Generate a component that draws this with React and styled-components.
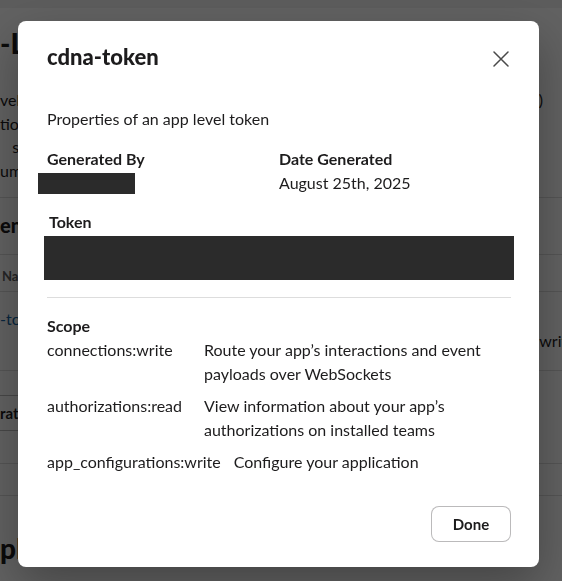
import React from 'react'
import styled, { createGlobalStyle } from 'styled-components'

const GlobalStyle = createGlobalStyle`
    html, body {
        margin: 0;
        padding: 0;
        background: #ffffff;
    }
    body {
        font-family: Lato, "Noto Sans", "Liberation Sans", sans-serif;
        color: #1d1c1d;
        overflow: hidden;
    }
`

const text = '#1d1c1d'

// ---------- background page (dimmed) ----------

const Page = styled.div`
    width: 562px;
    height: 581px;
    overflow: hidden;
    background: #ffffff;
    font-size: 16px;
`

const TopBar = styled.div`
    height: 8px;
    background: #f1f1f1;
`

const PageHeading = styled.h1`
    margin: 18px 0 0;
    font-size: 28px;
    line-height: 34px;
    font-weight: 900;
    white-space: nowrap;
`

const Intro = styled.div`
    margin-top: 28px;
`

const IntroLine = styled.div`
    display: flex;
    justify-content: space-between;
    padding-right: 19px;
    line-height: 23.5px;
    white-space: nowrap;
`

const Rule = styled.div`
    height: 1px;
    background: #dddddd;
    margin-top: ${p => p.$gap}px;
`

const SectionTitle = styled.h2`
    margin: 13px 0 0;
    font-size: 20px;
    line-height: 28px;
    font-weight: 900;
    white-space: nowrap;
`

const TableHead = styled.div`
    margin-top: 15px;
    border-top: 1px solid #dddddd;
    padding: 12px 0 6px 2px;
    font-size: 13px;
    line-height: 18px;
    font-weight: 700;
    color: #616061;
`

const TableRow = styled.div`
    display: grid;
    grid-template-columns: 1fr 112px;
    box-sizing: border-box;
    min-height: 80px;
    padding: 16px 0 18px;
    border-top: 1px solid #dddddd;
    border-bottom: 1px solid #dddddd;
    line-height: 22px;
    white-space: nowrap;
`

const TokenLink = styled.span`
    color: #1264a3;
    align-self: start;
`

const ScopeCell = styled.span`
    align-self: end;
`

const OutlineButton = styled.div`
    display: inline-flex;
    align-items: center;
    box-sizing: border-box;
    height: 36px;
    margin-top: 24px;
    padding: 0 16px 0 0;
    border: 1px solid #bbbbbb;
    border-left: none;
    border-radius: 0 4px 4px 0;
    font-size: 15px;
    font-weight: 700;
    white-space: nowrap;
`

const BottomHeading = styled(PageHeading)`
    margin-top: 35px;
`

// ---------- modal ----------

const Overlay = styled.div`
    position: fixed;
    inset: 0;
    background: rgba(0, 0, 0, 0.62);
    padding: 21px 0 0 18px;
`

const Modal = styled.div`
    width: 521px;
    background: #ffffff;
    border-radius: 8px;
    box-shadow: 0 18px 48px rgba(0, 0, 0, 0.3);
    display: flex;
    flex-direction: column;
    font-size: 16px;
    color: ${text};
`

const ModalHeader = styled.div`
    display: flex;
    justify-content: space-between;
    align-items: center;
    padding: 21px 26px 0 29px;
`

const Title = styled.h1`
    margin: 0;
    font-size: 22px;
    line-height: 30px;
    font-weight: 900;
`

const CloseButton = styled.button`
    width: 24px;
    height: 24px;
    margin-top: 4px;
    padding: 0;
    border: none;
    background: none;
    display: flex;
    align-items: center;
    justify-content: center;
    color: #4a4a4a;
    cursor: pointer;
`

const ModalBody = styled.div`
    padding: 36px 28px 0 29px;
`

const Lead = styled.p`
    margin: 0;
    line-height: 22px;
`

const MetaGrid = styled.div`
    display: grid;
    grid-template-columns: 1fr 1fr;
    margin-top: 18px;
`

const Label = styled.div`
    font-weight: 700;
    line-height: 22px;
    padding-left: ${p => p.$indent || 0}px;
`

const Value = styled.div`
    margin-top: 2px;
    line-height: 22px;
`

const Redacted = styled.div`
    background: #2b2b2b;
    width: ${p => p.$w}px;
    height: ${p => p.$h}px;
    margin: ${p => p.$top}px 0 0 ${p => p.$left}px;
`

const TokenBlock = styled.div`
    margin-top: 17px;
`

const Divider = styled.hr`
    margin: 17px 0 0;
    border: none;
    height: 1px;
    background: #dddddd;
`

const ScopeBlock = styled.div`
    margin-top: 17px;
`

const ScopeList = styled.div`
    display: flex;
    flex-direction: column;
    gap: 8px;
    margin-top: 1px;
`

const ScopeRow = styled.div`
    display: flex;
    gap: 13px;
    line-height: 24px;
`

const ScopeName = styled.span`
    min-width: 144px;
    white-space: nowrap;
`

const ScopeDesc = styled.span`
    flex: 1;
`

const ModalFooter = styled.div`
    display: flex;
    justify-content: flex-end;
    padding: 32px 28px 25px;
`

const DoneButton = styled.button`
    box-sizing: border-box;
    width: 80px;
    height: 36px;
    border: 1px solid rgba(29, 28, 29, 0.3);
    border-radius: 8px;
    background: #ffffff;
    font-family: inherit;
    font-size: 15px;
    font-weight: 700;
    color: ${text};
    cursor: pointer;
`

const scopes = [
    { name: 'connections:write', desc: 'Route your app’s interactions and event payloads over WebSockets' },
    { name: 'authorizations:read', desc: 'View information about your app’s authorizations on installed teams' },
    { name: 'app_configurations:write', desc: 'Configure your application' },
]

function CloseIcon() {
    return (
        <svg width="16" height="16" viewBox="0 0 16 16" fill="none">
            <path d="M1 1L15 15M15 1L1 15" stroke="currentColor" strokeWidth="1.5" strokeLinecap="round" />
        </svg>
    )
}

export default function App() {
    return (
        <>
            <GlobalStyle />
            <Page>
                <TopBar />
                <PageHeading>-Level Tokens</PageHeading>
                <Intro>
                    <IntroLine><span>vel tokens represent your app</span><span>)</span></IntroLine>
                    <IntroLine><span>tions across organizations</span><span></span></IntroLine>
                    <IntroLine><span>{'\u00a0\u00a0\u00a0'}so you can use them</span><span></span></IntroLine>
                    <IntroLine><span>um of tokens</span><span></span></IntroLine>
                </Intro>
                <Rule $gap={15} />
                <SectionTitle>ens</SectionTitle>
                <TableHead>Name</TableHead>
                <TableRow>
                    <TokenLink>-token</TokenLink>
                    <ScopeCell>connections:write</ScopeCell>
                </TableRow>
                <OutlineButton>rate Token and Scopes</OutlineButton>
                <Rule $gap={32} />
                <Rule $gap={31} />
                <BottomHeading>play Information</BottomHeading>
            </Page>

            <Overlay>
                <Modal role="dialog">
                    <ModalHeader>
                        <Title>cdna-token</Title>
                        <CloseButton aria-label="Close"><CloseIcon /></CloseButton>
                    </ModalHeader>
                    <ModalBody>
                        <Lead>Properties of an app level token</Lead>
                        <MetaGrid>
                            <div>
                                <Label>Generated By</Label>
                                <Redacted $w={97} $h={21} $top={3} $left={-9} />
                            </div>
                            <div>
                                <Label>Date Generated</Label>
                                <Value>August 25th, 2025</Value>
                            </div>
                        </MetaGrid>
                        <TokenBlock>
                            <Label $indent={2}>Token</Label>
                            <Redacted $w={470} $h={44} $top={3} $left={-3} />
                        </TokenBlock>
                        <Divider />
                        <ScopeBlock>
                            <Label>Scope</Label>
                            <ScopeList>
                                {scopes.map(s => (
                                    <ScopeRow key={s.name}>
                                        <ScopeName>{s.name}</ScopeName>
                                        <ScopeDesc>{s.desc}</ScopeDesc>
                                    </ScopeRow>
                                ))}
                            </ScopeList>
                        </ScopeBlock>
                    </ModalBody>
                    <ModalFooter>
                        <DoneButton>Done</DoneButton>
                    </ModalFooter>
                </Modal>
            </Overlay>
        </>
    )
}
